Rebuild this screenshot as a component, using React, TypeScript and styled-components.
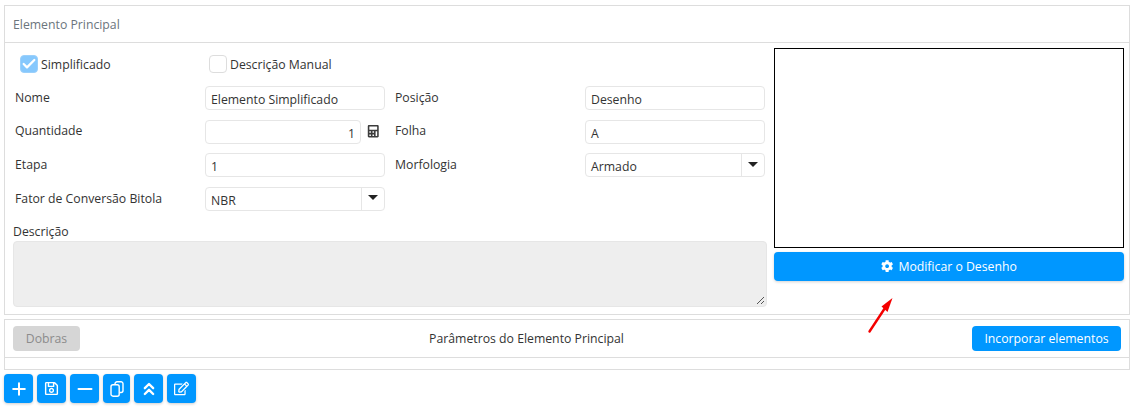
import React from 'react';
import styled, { createGlobalStyle } from 'styled-components';
import { FaCalculator, FaCog, FaRegEdit, FaRegSave } from 'react-icons/fa';
import { Check, ChevronsUp, Minus, Plus } from 'lucide-react';

const GlobalStyle = createGlobalStyle`
  html, body {
    margin: 0;
    padding: 0;
    background: #fff;
    font-family: "Open Sans", "Noto Sans", sans-serif;
    font-size: 12.25px;
    color: #333;
  }
`;

const Page = styled.div`
  position: relative;
  width: 1133px;
  height: 413px;
  padding: 5px 3px 0 4px;
  box-sizing: border-box;
  overflow: hidden;
`;

const Card = styled.section`
  border: 1px solid #ddd;
  height: 310px;
  box-sizing: border-box;
`;

const CardHeader = styled.header`
  height: 37px;
  box-sizing: border-box;
  padding: 0 8px;
  line-height: 37px;
  border-bottom: 1px solid #ddd;
  color: #6c757d;
`;

const CardBody = styled.div`
  display: flex;
`;

const FormArea = styled.div`
  width: 769px;
  flex: none;
  padding-top: 9px;
  box-sizing: border-box;
`;

const CheckRow = styled.div`
  display: flex;
  height: 24px;
  padding-left: 15px;
  margin-bottom: 10px;
  align-items: center;
`;

const CheckItem = styled.label<{ $width: number }>`
  display: flex;
  align-items: center;
  gap: 3px;
  width: ${p => p.$width}px;
`;

const CheckBox = styled.span<{ $checked?: boolean }>`
  display: flex;
  align-items: center;
  justify-content: center;
  width: 18px;
  height: 18px;
  box-sizing: border-box;
  border: 1px solid ${p => (p.$checked ? '#9bd0fb' : '#ddd')};
  border-radius: 4px;
  background: ${p => (p.$checked ? '#86c8fd' : '#fff')};
  color: #fff;
`;

const FieldGrid = styled.div`
  display: grid;
  grid-template-columns: 190px 190px 190px 180px;
  grid-auto-rows: 24px;
  row-gap: 9.6px;
  padding-left: 10px;
  align-items: center;
`;

const Label = styled.span`
  line-height: 24px;
  margin-top: -0.4px;
`;

const FieldWrap = styled.div`
  display: flex;
  align-items: center;
  width: 180px;
`;

const Input = styled.div<{ $right?: boolean }>`
  flex: 1;
  height: 24px;
  box-sizing: border-box;
  border: 1px solid #e6e6e6;
  border-radius: 4px;
  padding: 1px 5px 0;
  line-height: 23px;
  background: #fff;
  text-align: ${p => (p.$right ? 'right' : 'left')};
  overflow: hidden;
`;

const CalcIcon = styled.span`
  display: flex;
  width: 24px;
  justify-content: flex-end;
  padding-right: 6px;
  box-sizing: border-box;
  color: #3c3c3c;
  font-size: 12.5px;
`;

const SelectBox = styled.div`
  display: flex;
  width: 180px;
  height: 24px;
  box-sizing: border-box;
  border: 1px solid #e6e6e6;
  border-radius: 4px;
  padding-top: 1px;
  line-height: 23px;
`;

const SelectValue = styled.span`
  flex: 1;
  padding: 0 5px;
`;

const SelectArrow = styled.span`
  display: flex;
  width: 23px;
  margin-top: -1px;
  align-items: center;
  justify-content: center;
  border-left: 1px solid #e6e6e6;
  padding-bottom: 2px;
  box-sizing: border-box;

  &::before {
    content: '';
    border-style: solid;
    border-width: 5px 5.5px 0;
    border-color: #222 transparent transparent;
  }
`;

const DescriptionLabel = styled.div`
  margin: 12px 0 0 8px;
  line-height: 18px;
`;

const TextArea = styled.div`
  position: relative;
  height: 66px;
  margin: 0 7px 0 8px;
  background: #eee;
  border: 1px solid #e6e6e6;
  border-radius: 4px;
  box-sizing: border-box;
`;

const ResizeGrip = styled.svg`
  position: absolute;
  right: 1px;
  bottom: 1px;
`;

const DrawingArea = styled.div`
  width: 350px;
  padding-top: 5px;
`;

const DrawingFrame = styled.div`
  height: 200px;
  border: 1px solid #000;
  box-sizing: border-box;
`;

const PrimaryButton = styled.button<{ $wide?: boolean }>`
  display: flex;
  align-items: center;
  justify-content: center;
  gap: 5px;
  border: 0;
  border-radius: 4px;
  background: #0097ff;
  color: #fff;
  font: inherit;
  padding: 0;
  width: ${p => (p.$wide ? '100%' : '149px')};
  height: ${p => (p.$wide ? '29px' : '25px')};
  margin-top: ${p => (p.$wide ? '4px' : '0')};
  box-shadow: ${p => (p.$wide ? '0 1px 3px rgba(0,0,0,.18)' : 'none')};
`;

const ParamsCard = styled.section`
  margin-top: 4px;
  height: 51px;
  border: 1px solid #ddd;
  box-sizing: border-box;
`;

const ParamsBar = styled.div`
  display: flex;
  align-items: center;
  justify-content: space-between;
  height: 37px;
  padding: 0 8px;
  border-bottom: 1px solid #ddd;
`;

const DisabledButton = styled.button`
  width: 67px;
  height: 25px;
  border: 0;
  border-radius: 4px;
  background: #d6d6d6;
  color: #8c8c8c;
  font: inherit;
  padding: 0;
`;

const ParamsTitle = styled.span`
  margin-left: 1px;
`;

const Toolbar = styled.div`
  display: flex;
  gap: 4px;
  margin-top: 4px;
`;

const ToolButton = styled.button<{ $w: number; $size?: number }>`
  display: flex;
  align-items: center;
  justify-content: center;
  width: ${p => p.$w}px;
  height: 29px;
  border: 0;
  border-radius: 4px;
  background: #0097ff;
  color: #fff;
  padding: 0;
  font-size: ${p => p.$size ?? 14}px;
  box-shadow: 0 1px 3px rgba(0, 0, 0, 0.2);
`;

const Arrow = styled.svg`
  position: absolute;
  left: 866px;
  top: 296px;
`;

const CopyIcon = () => (
  <svg width="14" height="16" viewBox="0 0 14 16" fill="none" stroke="#fff" strokeWidth="1.4">
    <path d="M5 3.5 V2.8 A2 2 0 0 1 7 0.8 H11 A2 2 0 0 1 13 2.8 V9.5 A2 2 0 0 1 11 11.5 H9.5" />
    <rect x="1" y="3.8" width="8.2" height="11.4" rx="2" />
  </svg>
);

export default function App() {
  return (
    <Page>
      <GlobalStyle />
      <Card>
        <CardHeader>Elemento Principal</CardHeader>
        <CardBody>
          <FormArea>
            <CheckRow>
              <CheckItem $width={189}>
                <CheckBox $checked>
                  <Check size={18} strokeWidth={3.4} />
                </CheckBox>
                Simplificado
              </CheckItem>
              <CheckItem $width={200}>
                <CheckBox />
                Descrição Manual
              </CheckItem>
            </CheckRow>
            <FieldGrid>
              <Label>Nome</Label>
              <FieldWrap>
                <Input>Elemento Simplificado</Input>
              </FieldWrap>
              <Label>Posição</Label>
              <FieldWrap>
                <Input>Desenho</Input>
              </FieldWrap>
              <Label>Quantidade</Label>
              <FieldWrap>
                <Input $right>1</Input>
                <CalcIcon>
                  <FaCalculator />
                </CalcIcon>
              </FieldWrap>
              <Label>Folha</Label>
              <FieldWrap>
                <Input>A</Input>
              </FieldWrap>
              <Label>Etapa</Label>
              <FieldWrap>
                <Input>1</Input>
              </FieldWrap>
              <Label>Morfologia</Label>
              <SelectBox>
                <SelectValue>Armado</SelectValue>
                <SelectArrow />
              </SelectBox>
              <Label>Fator de Conversão Bitola</Label>
              <SelectBox>
                <SelectValue>NBR</SelectValue>
                <SelectArrow />
              </SelectBox>
            </FieldGrid>
            <DescriptionLabel>Descrição</DescriptionLabel>
            <TextArea>
              <ResizeGrip width="9" height="9" viewBox="0 0 9 9">
                <path d="M1 8 L8 1 M5 8 L8 5" stroke="#555" strokeWidth="1" />
              </ResizeGrip>
            </TextArea>
          </FormArea>
          <DrawingArea>
            <DrawingFrame />
            <PrimaryButton $wide>
              <FaCog />
              Modificar o Desenho
            </PrimaryButton>
          </DrawingArea>
        </CardBody>
      </Card>
      <ParamsCard>
        <ParamsBar>
          <DisabledButton>Dobras</DisabledButton>
          <ParamsTitle>Parâmetros do Elemento Principal</ParamsTitle>
          <PrimaryButton>Incorporar elementos</PrimaryButton>
        </ParamsBar>
      </ParamsCard>
      <Toolbar>
        <ToolButton $w={29}>
          <Plus size={20} strokeWidth={2.4} />
        </ToolButton>
        <ToolButton $w={29} $size={15}>
          <FaRegSave />
        </ToolButton>
        <ToolButton $w={29}>
          <Minus size={22} strokeWidth={2.4} />
        </ToolButton>
        <ToolButton $w={27}>
          <CopyIcon />
        </ToolButton>
        <ToolButton $w={29}>
          <ChevronsUp size={20} strokeWidth={2.8} />
        </ToolButton>
        <ToolButton $w={29} $size={15}>
          <FaRegEdit />
        </ToolButton>
      </Toolbar>
      <Arrow width="28" height="38" viewBox="0 0 28 38">
        <path d="M3.5 35.5 L19 12" stroke="#f40000" strokeWidth="2.4" strokeLinecap="round" />
        <path d="M26.5 2 L15.5 10.5 L21.5 16 Z" fill="#f40000" />
      </Arrow>
    </Page>
  );
}
